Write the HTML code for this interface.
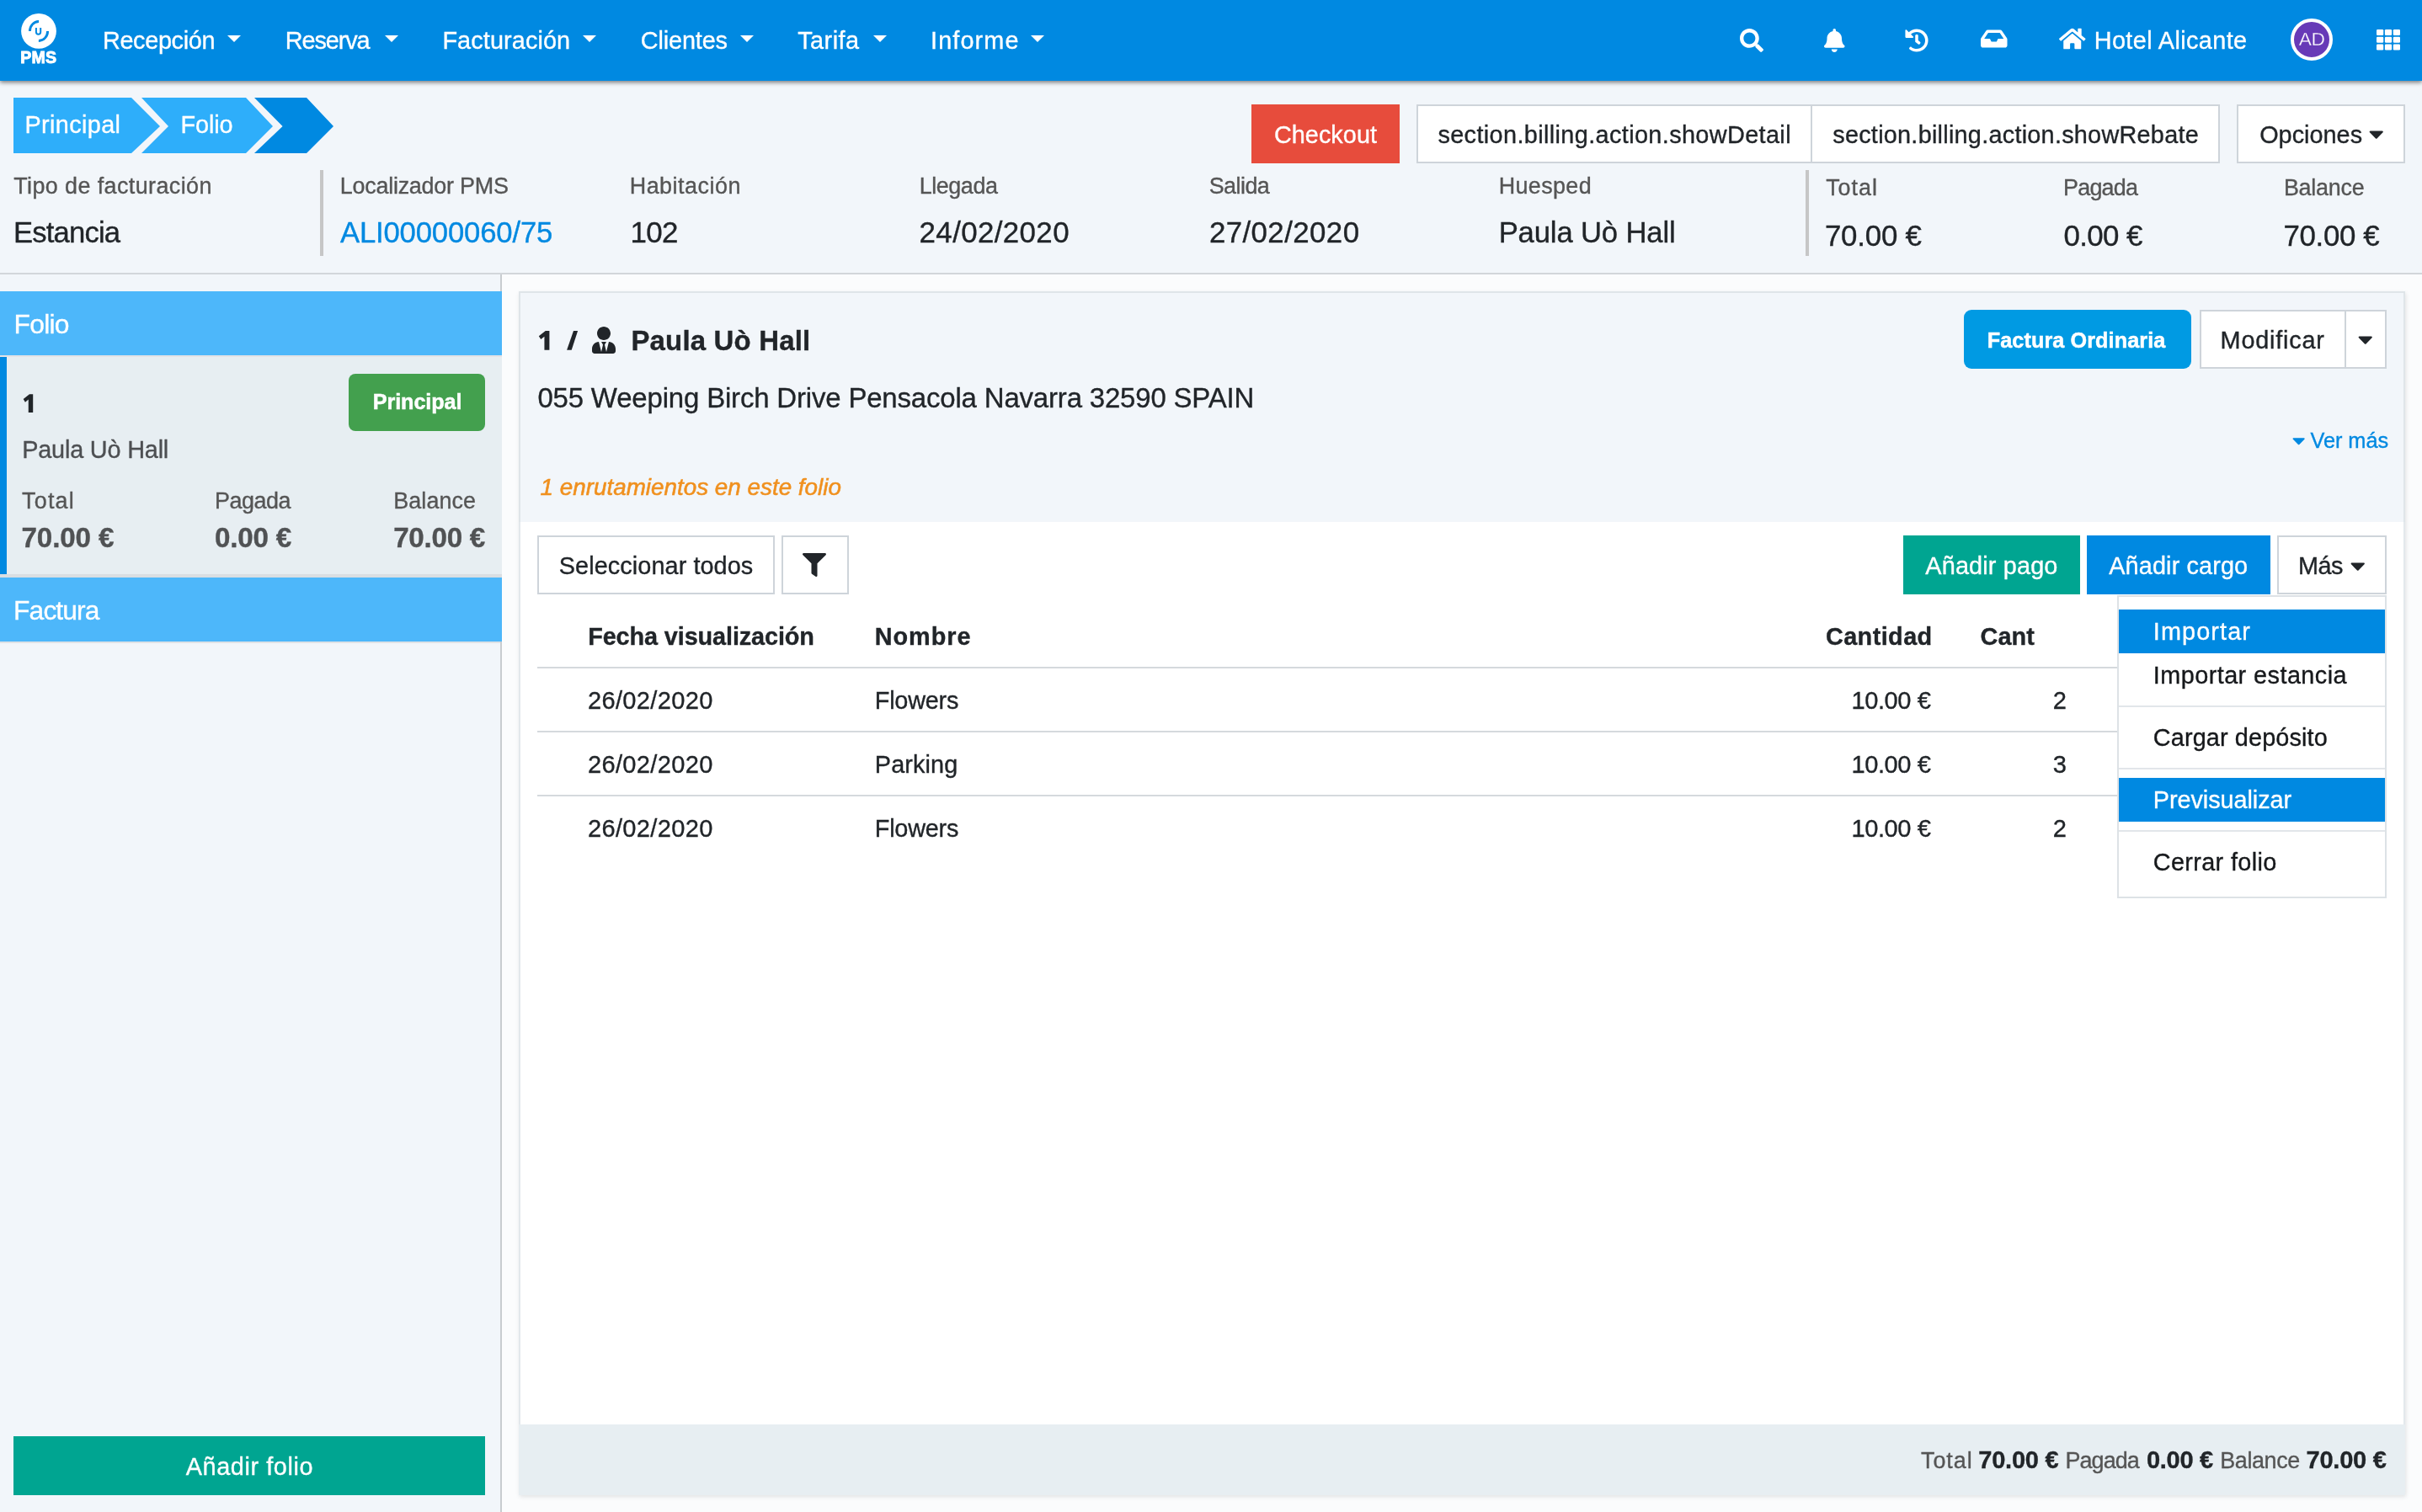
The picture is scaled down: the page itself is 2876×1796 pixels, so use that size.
<!DOCTYPE html>
<html lang="es">
<head>
<meta charset="utf-8">
<title>PMS - Folio</title>
<style>
*{box-sizing:border-box;margin:0;padding:0}
html,body{width:2876px;height:1796px;overflow:hidden}
body{background:#f2f6fa;font-family:"Liberation Sans",sans-serif;position:relative;color:#212529}
.a{position:absolute}
.t{position:absolute;white-space:nowrap;font-family:"Liberation Sans",sans-serif}
svg{position:absolute;overflow:visible}
.nav{left:0;top:0;width:2876px;height:96px;background:#0089e1;box-shadow:0 2px 5px rgba(0,0,0,.5)}
.caret{width:0;height:0;border-left:8.4px solid transparent;border-right:8.4px solid transparent;border-top:8.4px solid #fff}
.caret.d{border-top-color:#212529}
.btn{background:#fff;border:2px solid #ced4da}
</style>
</head>
<body>

<!-- main area background (right of sidebar) -->
<div class="a" style="left:596px;top:326px;width:2280px;height:1470px;background:#fbfcfd"></div>
<!-- horizontal separator under info row -->
<div class="a" style="left:0;top:324px;width:2876px;height:2px;background:#d2d6da"></div>
<!-- sidebar right border -->
<div class="a" style="left:594px;top:326px;width:2px;height:1470px;background:#c8ccd0"></div>

<!-- NAVBAR -->
<div class="a nav"></div>
<!-- logo -->
<svg style="left:24.95px;top:16.1px" width="42" height="42" viewBox="-21 -21 42 42">
  <circle cx="0" cy="-0.1" r="20.9" fill="#fff"/>
  <path d="M-10.6 0.1 A10.6 11.6 0 0 1 0.1 -11.5" fill="none" stroke="#0089e1" stroke-width="2.9"/>
  <path d="M10.6 -0.1 A10.6 11.6 0 0 1 -0.1 11.5" fill="none" stroke="#0089e1" stroke-width="2.9"/>
  <path d="M-3.1 -4.1 V1.05 A2.65 2.65 0 0 0 2.2 1.05 V-4.1" fill="none" stroke="#0089e1" stroke-width="2"/>
</svg>
<!-- nav carets -->
<div class="a caret" style="left:269.7px;top:42.1px"></div>
<div class="a caret" style="left:456.6px;top:42.1px"></div>
<div class="a caret" style="left:691.9px;top:42.1px"></div>
<div class="a caret" style="left:878.6px;top:42.1px"></div>
<div class="a caret" style="left:1036.8px;top:42.1px"></div>
<div class="a caret" style="left:1224.4px;top:42.1px"></div>
<!-- right icons -->
<svg style="left:2065.5px;top:33.5px" width="28" height="28" viewBox="0 0 512 512"><path fill="#fff" d="M505 442.700L405.300 343c-4.500-4.500-10.600-7-17-7H372c27.600-35.300 44-79.700 44-128C416 93.100 322.900 0 208 0S0 93.100 0 208s93.100 208 208 208c48.300 0 92.700-16.400 128-44v16.300c0 6.400 2.500 12.500 7 17l99.700 99.700c9.400 9.400 24.600 9.400 33.900 0l28.300-28.300c9.400-9.400 9.400-24.600.1-34zM208 336c-70.700 0-128-57.200-128-128 0-70.700 57.200-128 128-128 70.700 0 128 57.200 128 128 0 70.700-57.200 128-128 128z"/></svg>
<svg style="left:2165.6px;top:33.5px" width="24.5" height="28" viewBox="0 0 448 512"><path fill="#fff" d="M224 512c35.320 0 63.970-28.650 63.970-64H160.030c0 35.350 28.650 64 63.970 64zm215.390-149.710c-19.320-20.760-55.470-51.990-55.470-154.290 0-77.700-54.480-139.900-127.940-155.160V32c0-17.670-14.320-32-31.980-32s-31.980 14.330-31.980 32v20.840C118.560 68.100 64.080 130.300 64.080 208c0 102.300-36.150 133.530-55.470 154.290-6 6.450-8.660 14.160-8.610 21.710.11 16.400 12.980 32 32.100 32h383.800c19.120 0 32-15.600 32.100-32 .05-7.550-2.610-15.270-8.610-21.710z"/></svg>
<svg style="left:2261.8px;top:33.5px" width="28" height="28" viewBox="0 0 512 512"><path fill="#fff" d="M504 255.531c.253 136.640-111.180 248.372-247.820 248.468-59.015.042-113.223-20.530-155.822-54.911-11.077-8.940-11.905-25.541-1.839-35.607l11.267-11.267c8.609-8.609 22.353-9.551 31.891-1.984C173.062 425.135 212.781 440 256 440c101.705 0 184-82.311 184-184 0-101.705-82.311-184-184-184-48.814 0-93.149 18.969-126.068 49.932l50.754 50.754c10.080 10.080 2.941 27.314-11.313 27.314H24c-8.837 0-16-7.163-16-16V38.627c0-14.254 17.234-21.393 27.314-11.314l49.372 49.372C129.209 34.136 189.552 8 256 8c136.810 0 247.747 110.780 248 247.531zm-180.912 78.784l9.823-12.630c8.138-10.463 6.253-25.542-4.210-33.679L288 256.349V152c0-13.255-10.745-24-24-24h-16c-13.255 0-24 10.745-24 24v135.651l65.409 50.874c10.463 8.137 25.541 6.253 33.679-4.210z"/></svg>
<svg style="left:2352.2px;top:31.5px" width="31.5" height="28" viewBox="0 0 576 512"><path fill="#fff" d="M567.938 243.908L462.250 85.374A48.003 48.003 0 0 0 422.311 64H153.689a48 48 0 0 0-39.938 21.374L8.062 243.908A47.994 47.994 0 0 0 0 270.533V400c0 26.510 21.490 48 48 48h480c26.510 0 48-21.490 48-48V270.533a47.994 47.994 0 0 0-8.062-26.625zM162.252 128h251.497l85.333 128H376l-32 64H232l-32-64H76.918l85.334-128z"/></svg>
<svg style="left:2445.4px;top:31.7px" width="31.5" height="28" viewBox="0 0 576 512"><path fill="#fff" d="M280.370 148.260L96 300.110V464a16 16 0 0 0 16 16l112.060-.290a16 16 0 0 0 15.920-16V368a16 16 0 0 1 16-16h64a16 16 0 0 1 16 16v95.640a16 16 0 0 0 16 16.050L464 480a16 16 0 0 0 16-16V300L295.670 148.260a12.190 12.190 0 0 0-15.300 0zM571.600 251.470L488 182.560V44.050a12 12 0 0 0-12-12h-56a12 12 0 0 0-12 12v72.610L318.470 43a48 48 0 0 0-61 0L4.340 251.470a12 12 0 0 0-1.600 16.900l25.500 31A12 12 0 0 0 45.150 301l235.220-193.740a12.190 12.190 0 0 1 15.300 0L530.900 301a12 12 0 0 0 16.900-1.600l25.500-31a12 12 0 0 0-1.700-16.930z"/></svg>
<!-- avatar -->
<div class="a" style="left:2720px;top:22px;width:50px;height:50px;border-radius:50%;background:#673ab7;border:4px solid #fff"></div>
<!-- grid icon -->
<svg style="left:2822px;top:35.2px" width="28" height="25" viewBox="0 0 28 25">
  <g fill="#fff">
    <rect x="0" y="0" width="8.2" height="7" rx="1.3"/><rect x="9.9" y="0" width="8.2" height="7" rx="1.3"/><rect x="19.8" y="0" width="8.2" height="7" rx="1.3"/>
    <rect x="0" y="8.75" width="8.2" height="7" rx="1.3"/><rect x="9.9" y="8.75" width="8.2" height="7" rx="1.3"/><rect x="19.8" y="8.75" width="8.2" height="7" rx="1.3"/>
    <rect x="0" y="17.5" width="8.2" height="7" rx="1.3"/><rect x="9.9" y="17.5" width="8.2" height="7" rx="1.3"/><rect x="19.8" y="17.5" width="8.2" height="7" rx="1.3"/>
  </g>
</svg>

<!-- BREADCRUMB -->
<svg style="left:0;top:116px" width="400" height="66" viewBox="0 0 400 66">
  <polygon points="16,0 156,0 190,34 156,66 16,66" fill="#2eaefa"/>
  <polygon points="168,0 292,0 324,34 292,66 168,66 200,34" fill="#2eaefa"/>
  <polygon points="302,0 364,0 396,34 364,66 302,66 335.600,34" fill="#0089e1"/>
</svg>

<!-- ACTION ROW -->
<div class="a" style="left:1486px;top:124px;width:176px;height:70px;background:#e74c3c"></div>
<div class="a btn" style="left:1682px;top:124px;width:470px;height:70px"></div>
<div class="a btn" style="left:2150px;top:124px;width:486px;height:70px"></div>
<div class="a btn" style="left:2656px;top:124px;width:200px;height:70px"></div>
<svg style="left:2812.65px;top:145.40px" width="17.50" height="28" viewBox="0 0 320 512"><path fill="#212529" d="M31.3 192h257.3c17.8 0 26.7 21.5 14.1 34.1L174.100 354.800c-7.800 7.800-20.500 7.800-28.300 0L17.200 226.100C4.600 213.500 13.500 192 31.300 192z"/></svg>

<!-- INFO ROW dividers -->
<div class="a" style="left:380px;top:202px;width:4px;height:102px;background:#c6c6c6"></div>
<div class="a" style="left:2144px;top:202px;width:4px;height:102px;background:#c6c6c6"></div>

<!-- SIDEBAR -->
<div class="a" style="left:0;top:346px;width:596px;height:76px;background:#4db7fa"></div>
<div class="a" style="left:0;top:422px;width:596px;height:2px;background:#e4e3e6"></div>
<div class="a" style="left:0;top:424px;width:596px;height:258px;background:#e7eef2;border-left:8px solid #0089e1"></div>
<div class="a" style="left:0;top:682px;width:596px;height:4px;background:#d9dee2"></div>
<div class="a" style="left:0;top:686px;width:596px;height:76px;background:#4db7fa"></div>
<div class="a" style="left:0;top:762px;width:594px;height:2px;background:#dee2e6"></div>
<div class="a" style="left:414px;top:444px;width:162px;height:68px;background:#43a04e;border-radius:8px"></div>
<div class="a" style="left:16px;top:1706px;width:560px;height:70px;background:#00a591"></div>

<!-- PANEL -->
<div class="a" style="left:616px;top:346px;width:2240px;height:1430px;background:#fff;box-shadow:1px 2px 5px rgba(0,0,0,.10)"></div>
<div class="a" style="left:616px;top:346px;width:2240px;height:274px;background:#f2f6fa;border-top:2px solid #dfe5e9;border-left:2px solid #dfe5e9;border-right:2px solid #dfe5e9"></div>
<div class="a" style="left:616px;top:620px;width:2px;height:1072px;background:#e3e8ec"></div>
<div class="a" style="left:2854px;top:620px;width:2px;height:1072px;background:#e3e8ec"></div>
<div class="a" style="left:616px;top:1692px;width:2240px;height:84px;background:#e7eef2"></div>

<!-- panel header -->
<svg style="left:702.8px;top:388px" width="28" height="32" viewBox="0 0 448 512"><path fill="#212529" d="M224 256c70.700 0 128-57.300 128-128S294.700 0 224 0 96 57.300 96 128s57.300 128 128 128zm95.800 32.600L272 480l-32-136 32-56h-96l32 56-32 136-47.800-191.400C56.900 292 0 350.300 0 422.400V464c0 26.500 21.500 48 48 48h352c26.500 0 48-21.500 48-48v-41.600c0-72.100-56.900-130.400-128.200-133.800z"/></svg>
<div class="a" style="left:2332px;top:368px;width:270px;height:70px;background:#009ae3;border-radius:9px"></div>
<div class="a btn" style="left:2612px;top:368px;width:174px;height:70px"></div>
<div class="a btn" style="left:2784px;top:368px;width:50px;height:70px"></div>
<svg style="left:2800.45px;top:389.40px" width="17.50" height="28" viewBox="0 0 320 512"><path fill="#212529" d="M31.3 192h257.3c17.8 0 26.7 21.5 14.1 34.1L174.100 354.800c-7.800 7.800-20.500 7.800-28.300 0L17.200 226.100C4.600 213.500 13.500 192 31.300 192z"/></svg>
<svg style="left:2721.95px;top:511.05px" width="15.31" height="24.5" viewBox="0 0 320 512"><path fill="#0089e1" d="M31.3 192h257.3c17.8 0 26.7 21.5 14.1 34.1L174.100 354.800c-7.800 7.800-20.500 7.800-28.300 0L17.200 226.100C4.600 213.500 13.500 192 31.300 192z"/></svg>

<!-- toolbar -->
<div class="a btn" style="left:638px;top:636px;width:282px;height:70px"></div>
<div class="a btn" style="left:928px;top:636px;width:80px;height:70px"></div>
<svg style="left:953.4px;top:657.4px" width="28" height="28" viewBox="0 0 512 512"><path fill="#212529" d="M487.976 0H24.028C2.710 0-8.047 25.866 7.058 40.971L192 225.941V432c0 7.831 3.821 15.170 10.237 19.662l80 55.980C298.020 518.690 320 507.493 320 487.980V225.941l184.947-184.970C520.021 25.896 509.338 0 487.976 0z"/></svg>
<div class="a" style="left:2260px;top:636px;width:210px;height:70px;background:#00a591"></div>
<div class="a" style="left:2478px;top:636px;width:218px;height:70px;background:#0089e1"></div>
<div class="a btn" style="left:2704px;top:636px;width:130px;height:70px"></div>
<svg style="left:2790.55px;top:657.50px" width="17.50" height="28" viewBox="0 0 320 512"><path fill="#212529" d="M31.3 192h257.3c17.8 0 26.7 21.5 14.1 34.1L174.100 354.800c-7.800 7.800-20.500 7.800-28.300 0L17.200 226.100C4.600 213.500 13.500 192 31.300 192z"/></svg>

<!-- table lines -->
<div class="a" style="left:638px;top:792px;width:1880px;height:2px;background:#d5d9dd"></div>
<div class="a" style="left:638px;top:868px;width:1880px;height:2px;background:#d5d9dd"></div>
<div class="a" style="left:638px;top:944px;width:1880px;height:2px;background:#d5d9dd"></div>

<!-- dropdown -->
<div class="a" style="left:2514px;top:707px;width:320px;height:360px;background:#fff;border:2px solid #dde2e6"></div>
<div class="a" style="left:2516px;top:724px;width:316px;height:52px;background:#0089e1"></div>
<div class="a" style="left:2516px;top:838px;width:316px;height:2px;background:#e2e6ea"></div>
<div class="a" style="left:2516px;top:912px;width:316px;height:2px;background:#e2e6ea"></div>
<div class="a" style="left:2516px;top:924px;width:316px;height:52px;background:#0089e1"></div>
<div class="a" style="left:2516px;top:986px;width:316px;height:2px;background:#e2e6ea"></div>

<!-- bold 1 and / glyphs -->
<svg style="left:0;top:0" width="2876" height="1796" viewBox="0 0 2876 1796"><polygon points="34.95,468.20 39.20,468.20 39.20,490.00 33.76,490.00 33.76,474.56 29.96,477.74 27.70,474.10" fill="#212529"/><polygon points="647.74,393.00 652.40,393.00 652.40,415.80 646.44,415.80 646.44,399.65 642.28,402.98 639.80,399.17" fill="#212529"/><polygon points="681.0,393 686.1,393 678.7,415.8 673.1,415.8" fill="#212529"/></svg>
<!-- TEXTS -->
<div class="a" style="left:0;top:0;width:2876px;height:1796px;will-change:transform">
<span class="t" style="left:24.19px;top:58.75px;font-size:19.60px;line-height:19.60px;color:#ffffff;font-weight:bold;letter-spacing:0.256px;-webkit-text-stroke-width:0.9px;">PMS</span>
<span class="t" style="left:121.90px;top:34.00px;font-size:28.84px;line-height:28.84px;color:#ffffff;letter-spacing:-0.325px;-webkit-text-stroke-width:0.35px;">Recepción</span>
<span class="t" style="left:338.70px;top:34.00px;font-size:28.84px;line-height:28.84px;color:#ffffff;letter-spacing:-1.067px;-webkit-text-stroke-width:0.35px;">Reserva</span>
<span class="t" style="left:525.40px;top:34.00px;font-size:28.84px;line-height:28.84px;color:#ffffff;letter-spacing:0.110px;-webkit-text-stroke-width:0.35px;">Facturación</span>
<span class="t" style="left:760.80px;top:34.00px;font-size:28.84px;line-height:28.84px;color:#ffffff;letter-spacing:-0.144px;-webkit-text-stroke-width:0.35px;">Clientes</span>
<span class="t" style="left:947.20px;top:34.00px;font-size:28.84px;line-height:28.84px;color:#ffffff;letter-spacing:0.480px;-webkit-text-stroke-width:0.35px;">Tarifa</span>
<span class="t" style="left:1105.10px;top:34.00px;font-size:28.84px;line-height:28.84px;color:#ffffff;letter-spacing:1.100px;-webkit-text-stroke-width:0.35px;">Informe</span>
<span class="t" style="left:2486.70px;top:34.00px;font-size:28.84px;line-height:28.84px;color:#ffffff;letter-spacing:0.398px;-webkit-text-stroke-width:0.35px;">Hotel Alicante</span>
<span class="t" style="left:2729.82px;top:35.00px;font-size:22.80px;line-height:22.80px;color:#ffffff;letter-spacing:-0.524px;-webkit-text-stroke:0.3px #673ab7;">AD</span>
<span class="t" style="left:29.40px;top:134.00px;font-size:28.84px;line-height:28.84px;color:#ffffff;letter-spacing:0.375px;-webkit-text-stroke-width:0.35px;">Principal</span>
<span class="t" style="left:214.60px;top:134.00px;font-size:28.84px;line-height:28.84px;color:#ffffff;letter-spacing:-0.125px;-webkit-text-stroke-width:0.35px;">Folio</span>
<span class="t" style="left:1512.90px;top:146.00px;font-size:28.84px;line-height:28.84px;color:#ffffff;letter-spacing:0.043px;-webkit-text-stroke-width:0.35px;">Checkout</span>
<span class="t" style="left:1707.39px;top:146.00px;font-size:28.84px;line-height:28.84px;color:#212529;letter-spacing:0.380px;-webkit-text-stroke-width:0.35px;">section.billing.action.showDetail</span>
<span class="t" style="left:2176.24px;top:146.00px;font-size:28.84px;line-height:28.84px;color:#212529;letter-spacing:0.257px;-webkit-text-stroke-width:0.35px;">section.billing.action.showRebate</span>
<span class="t" style="left:2683.20px;top:146.00px;font-size:28.84px;line-height:28.84px;color:#212529;letter-spacing:0.014px;-webkit-text-stroke-width:0.35px;">Opciones</span>
<span class="t" style="left:16.20px;top:208.00px;font-size:26.91px;line-height:26.91px;color:#555555;letter-spacing:0.409px;-webkit-text-stroke-width:0.35px;">Tipo de facturación</span>
<span class="t" style="left:403.80px;top:208.00px;font-size:26.91px;line-height:26.91px;color:#555555;letter-spacing:-0.240px;-webkit-text-stroke-width:0.35px;">Localizador PMS</span>
<span class="t" style="left:747.70px;top:208.00px;font-size:26.91px;line-height:26.91px;color:#555555;letter-spacing:0.511px;-webkit-text-stroke-width:0.35px;">Habitación</span>
<span class="t" style="left:1091.80px;top:208.00px;font-size:26.91px;line-height:26.91px;color:#555555;letter-spacing:-0.450px;-webkit-text-stroke-width:0.35px;">Llegada</span>
<span class="t" style="left:1435.70px;top:208.00px;font-size:26.91px;line-height:26.91px;color:#555555;letter-spacing:-0.540px;-webkit-text-stroke-width:0.35px;">Salida</span>
<span class="t" style="left:1779.70px;top:208.00px;font-size:26.91px;line-height:26.91px;color:#555555;letter-spacing:0.380px;-webkit-text-stroke-width:0.35px;">Huesped</span>
<span class="t" style="left:2168.20px;top:210.00px;font-size:26.91px;line-height:26.91px;color:#555555;letter-spacing:0.976px;-webkit-text-stroke-width:0.35px;">Total</span>
<span class="t" style="left:2450.00px;top:210.00px;font-size:26.91px;line-height:26.91px;color:#555555;letter-spacing:-0.760px;-webkit-text-stroke-width:0.35px;">Pagada</span>
<span class="t" style="left:2711.90px;top:210.00px;font-size:26.91px;line-height:26.91px;color:#555555;letter-spacing:-0.229px;-webkit-text-stroke-width:0.35px;">Balance</span>
<span class="t" style="left:15.93px;top:259.00px;font-size:34.68px;line-height:34.68px;color:#212529;letter-spacing:-0.823px;-webkit-text-stroke-width:0.35px;">Estancia</span>
<span class="t" style="left:403.94px;top:259.00px;font-size:34.68px;line-height:34.68px;color:#0089e1;letter-spacing:-0.166px;-webkit-text-stroke-width:0.35px;">ALI00000060/75</span>
<span class="t" style="left:748.40px;top:259.00px;font-size:34.88px;line-height:34.88px;color:#212529;letter-spacing:-0.550px;-webkit-text-stroke-width:0.35px;">102</span>
<span class="t" style="left:1091.60px;top:259.00px;font-size:34.88px;line-height:34.88px;color:#212529;letter-spacing:0.378px;-webkit-text-stroke-width:0.35px;">24/02/2020</span>
<span class="t" style="left:1435.90px;top:259.00px;font-size:34.88px;line-height:34.88px;color:#212529;letter-spacing:0.400px;-webkit-text-stroke-width:0.35px;">27/02/2020</span>
<span class="t" style="left:1779.63px;top:259.00px;font-size:34.68px;line-height:34.68px;color:#212529;letter-spacing:-0.161px;-webkit-text-stroke-width:0.35px;">Paula Uò Hall</span>
<span class="t" style="left:2166.89px;top:263.00px;font-size:34.88px;line-height:34.88px;color:#212529;letter-spacing:-0.203px;-webkit-text-stroke-width:0.35px;">70.00 €</span>
<span class="t" style="left:2450.40px;top:263.00px;font-size:34.88px;line-height:34.88px;color:#212529;letter-spacing:-0.585px;-webkit-text-stroke-width:0.35px;">0.00 €</span>
<span class="t" style="left:2711.49px;top:263.00px;font-size:34.88px;line-height:34.88px;color:#212529;letter-spacing:-0.353px;-webkit-text-stroke-width:0.35px;">70.00 €</span>
<span class="t" style="left:16.50px;top:370.00px;font-size:31.79px;line-height:31.79px;color:#ffffff;letter-spacing:-0.725px;-webkit-text-stroke-width:0.35px;">Folio</span>
<span class="t" style="left:442.80px;top:465.30px;font-size:25.20px;line-height:25.20px;color:#ffffff;font-weight:bold;letter-spacing:-0.100px;-webkit-text-stroke-width:0.5px;">Principal</span>
<span class="t" style="left:26.20px;top:519.80px;font-size:28.84px;line-height:28.84px;color:#4d4f52;letter-spacing:-0.183px;-webkit-text-stroke-width:0.35px;">Paula Uò Hall</span>
<span class="t" style="left:26.10px;top:582.00px;font-size:26.91px;line-height:26.91px;color:#555555;letter-spacing:1.201px;-webkit-text-stroke-width:0.35px;">Total</span>
<span class="t" style="left:255.10px;top:582.00px;font-size:26.91px;line-height:26.91px;color:#555555;letter-spacing:-0.460px;-webkit-text-stroke-width:0.35px;">Pagada</span>
<span class="t" style="left:467.20px;top:582.00px;font-size:26.91px;line-height:26.91px;color:#555555;letter-spacing:0.105px;-webkit-text-stroke-width:0.35px;">Balance</span>
<span class="t" style="left:25.50px;top:622.00px;font-size:33.22px;line-height:33.22px;color:#505254;font-weight:bold;letter-spacing:-0.161px;-webkit-text-stroke-width:0.35px;">70.00 €</span>
<span class="t" style="left:255.05px;top:622.00px;font-size:33.22px;line-height:33.22px;color:#505254;font-weight:bold;letter-spacing:-0.255px;-webkit-text-stroke-width:0.35px;">0.00 €</span>
<span class="t" style="left:467.20px;top:622.00px;font-size:33.22px;line-height:33.22px;color:#505254;font-weight:bold;letter-spacing:-0.295px;-webkit-text-stroke-width:0.35px;">70.00 €</span>
<span class="t" style="left:16.10px;top:710.00px;font-size:31.79px;line-height:31.79px;color:#ffffff;letter-spacing:-0.900px;-webkit-text-stroke-width:0.35px;">Factura</span>
<span class="t" style="left:220.74px;top:1728.30px;font-size:28.84px;line-height:28.84px;color:#ffffff;letter-spacing:0.598px;-webkit-text-stroke-width:0.35px;">Añadir folio</span>
<span class="t" style="left:749.40px;top:388.80px;font-size:32.96px;line-height:32.96px;color:#212529;font-weight:bold;letter-spacing:0.183px;-webkit-text-stroke-width:0.35px;">Paula Uò Hall</span>
<span class="t" style="left:638.40px;top:457.00px;font-size:32.96px;line-height:32.96px;color:#212529;letter-spacing:-0.168px;-webkit-text-stroke-width:0.35px;">055 Weeping Birch Drive Pensacola Navarra 32590 SPAIN</span>
<span class="t" style="left:2359.70px;top:391.50px;font-size:25.20px;line-height:25.20px;color:#ffffff;font-weight:bold;letter-spacing:0.106px;-webkit-text-stroke-width:0.5px;">Factura Ordinaria</span>
<span class="t" style="left:2636.60px;top:389.90px;font-size:28.84px;line-height:28.84px;color:#212529;letter-spacing:0.788px;-webkit-text-stroke-width:0.35px;">Modificar</span>
<span class="t" style="left:2743.42px;top:511.20px;font-size:25.34px;line-height:25.34px;color:#0089e1;letter-spacing:-0.022px;-webkit-text-stroke-width:0.35px;">Ver más</span>
<span class="t" style="left:641.50px;top:565.10px;font-size:27.80px;line-height:27.80px;color:#f0901e;font-style:italic;letter-spacing:0.017px;-webkit-text-stroke-width:0.55px;">1 enrutamientos en este folio</span>
<span class="t" style="left:663.80px;top:658.00px;font-size:28.84px;line-height:28.84px;color:#212529;letter-spacing:0.081px;-webkit-text-stroke-width:0.35px;">Seleccionar todos</span>
<span class="t" style="left:2286.34px;top:658.00px;font-size:28.84px;line-height:28.84px;color:#ffffff;letter-spacing:0.156px;-webkit-text-stroke-width:0.35px;">Añadir pago</span>
<span class="t" style="left:2504.24px;top:658.00px;font-size:28.84px;line-height:28.84px;color:#ffffff;letter-spacing:0.133px;-webkit-text-stroke-width:0.35px;">Añadir cargo</span>
<span class="t" style="left:2729.00px;top:658.00px;font-size:28.84px;line-height:28.84px;color:#212529;letter-spacing:-0.500px;-webkit-text-stroke-width:0.35px;">Más</span>
<span class="t" style="left:698.21px;top:741.80px;font-size:28.84px;line-height:28.84px;color:#212529;font-weight:bold;letter-spacing:-0.112px;-webkit-text-stroke-width:0.35px;">Fecha visualización</span>
<span class="t" style="left:1038.71px;top:741.80px;font-size:28.84px;line-height:28.84px;color:#212529;font-weight:bold;letter-spacing:0.988px;-webkit-text-stroke-width:0.35px;">Nombre</span>
<span class="t" style="left:2167.90px;top:741.80px;font-size:28.84px;line-height:28.84px;color:#212529;font-weight:bold;letter-spacing:0.429px;-webkit-text-stroke-width:0.35px;">Cantidad</span>
<span class="t" style="left:2351.40px;top:741.80px;font-size:28.84px;line-height:28.84px;color:#212529;font-weight:bold;letter-spacing:0.167px;-webkit-text-stroke-width:0.35px;">Cant</span>
<span class="t" style="left:697.90px;top:818.00px;font-size:29.06px;line-height:29.06px;color:#212529;letter-spacing:0.344px;-webkit-text-stroke-width:0.35px;">26/02/2020</span>
<span class="t" style="left:1038.80px;top:818.00px;font-size:28.84px;line-height:28.84px;color:#212529;letter-spacing:-0.218px;-webkit-text-stroke-width:0.35px;">Flowers</span>
<span class="t" style="left:2198.60px;top:818.00px;font-size:29.06px;line-height:29.06px;color:#212529;letter-spacing:-0.450px;-webkit-text-stroke-width:0.35px;">10.00 €</span>
<span class="t" style="left:2437.80px;top:818.00px;font-size:29.06px;line-height:29.06px;color:#212529;-webkit-text-stroke-width:0.35px;">2</span>
<span class="t" style="left:697.90px;top:894.00px;font-size:29.06px;line-height:29.06px;color:#212529;letter-spacing:0.344px;-webkit-text-stroke-width:0.35px;">26/02/2020</span>
<span class="t" style="left:1038.80px;top:894.00px;font-size:28.84px;line-height:28.84px;color:#212529;letter-spacing:0.124px;-webkit-text-stroke-width:0.35px;">Parking</span>
<span class="t" style="left:2198.60px;top:894.00px;font-size:29.06px;line-height:29.06px;color:#212529;letter-spacing:-0.450px;-webkit-text-stroke-width:0.35px;">10.00 €</span>
<span class="t" style="left:2437.66px;top:894.00px;font-size:29.06px;line-height:29.06px;color:#212529;-webkit-text-stroke-width:0.35px;">3</span>
<span class="t" style="left:697.90px;top:970.00px;font-size:29.06px;line-height:29.06px;color:#212529;letter-spacing:0.344px;-webkit-text-stroke-width:0.35px;">26/02/2020</span>
<span class="t" style="left:1038.80px;top:970.00px;font-size:28.84px;line-height:28.84px;color:#212529;letter-spacing:-0.218px;-webkit-text-stroke-width:0.35px;">Flowers</span>
<span class="t" style="left:2198.60px;top:970.00px;font-size:29.06px;line-height:29.06px;color:#212529;letter-spacing:-0.450px;-webkit-text-stroke-width:0.35px;">10.00 €</span>
<span class="t" style="left:2437.80px;top:970.00px;font-size:29.06px;line-height:29.06px;color:#212529;-webkit-text-stroke-width:0.35px;">2</span>
<span class="t" style="left:2556.80px;top:735.90px;font-size:28.84px;line-height:28.84px;color:#ffffff;letter-spacing:1.108px;-webkit-text-stroke-width:0.35px;">Importar</span>
<span class="t" style="left:2556.80px;top:787.80px;font-size:28.84px;line-height:28.84px;color:#16181b;letter-spacing:0.441px;-webkit-text-stroke-width:0.35px;">Importar estancia</span>
<span class="t" style="left:2556.80px;top:861.90px;font-size:28.84px;line-height:28.84px;color:#16181b;letter-spacing:0.132px;-webkit-text-stroke-width:0.35px;">Cargar depósito</span>
<span class="t" style="left:2556.80px;top:935.80px;font-size:28.84px;line-height:28.84px;color:#ffffff;letter-spacing:-0.058px;-webkit-text-stroke-width:0.35px;">Previsualizar</span>
<span class="t" style="left:2556.80px;top:1009.80px;font-size:28.84px;line-height:28.84px;color:#16181b;letter-spacing:0.345px;-webkit-text-stroke-width:0.35px;">Cerrar folio</span>
<span class="t" style="left:2281.00px;top:1722.20px;font-size:26.91px;line-height:26.91px;color:#555555;letter-spacing:0.976px;-webkit-text-stroke-width:0.35px;">Total</span>
<span class="t" style="left:2349.25px;top:1720.20px;font-size:29.06px;line-height:29.06px;color:#212529;font-weight:bold;letter-spacing:-0.250px;-webkit-text-stroke-width:0.35px;">70.00 €</span>
<span class="t" style="left:2452.50px;top:1722.20px;font-size:26.91px;line-height:26.91px;color:#555555;letter-spacing:-0.900px;-webkit-text-stroke-width:0.35px;">Pagada</span>
<span class="t" style="left:2549.00px;top:1720.20px;font-size:29.06px;line-height:29.06px;color:#212529;font-weight:bold;letter-spacing:-0.333px;-webkit-text-stroke-width:0.35px;">0.00 €</span>
<span class="t" style="left:2636.25px;top:1722.20px;font-size:26.91px;line-height:26.91px;color:#555555;letter-spacing:-0.370px;-webkit-text-stroke-width:0.35px;">Balance</span>
<span class="t" style="left:2738.50px;top:1720.20px;font-size:29.06px;line-height:29.06px;color:#212529;font-weight:bold;letter-spacing:-0.241px;-webkit-text-stroke-width:0.35px;">70.00 €</span>
</div>

</body>
</html>
